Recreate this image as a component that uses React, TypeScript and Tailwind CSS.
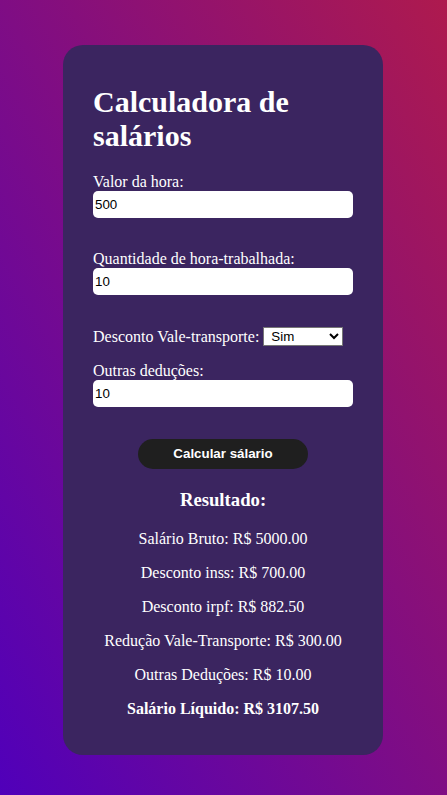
import React from "react";

const results = [
  "Salário Bruto: R$ 5000.00",
  "Desconto inss: R$ 700.00",
  "Desconto irpf: R$ 882.50",
  "Redução Vale-Transporte: R$ 300.00",
  "Outras Deduções: R$ 10.00",
];

export default function App() {
  return (
    <div className="min-h-[795px] w-full bg-[linear-gradient(to_right_top,#5000ba,#ae1a4e)] pt-[45px] pb-10 font-['Liberation_Serif',serif] text-white">
      <div className="ml-[63px] w-[320px] h-[710px] rounded-[20px] bg-[#3b2560] px-[30px] pt-5 pb-[36px]">
        <h1 className="mt-5 mb-[19px] text-[30px] font-bold leading-[34px]">
          Calculadora de salários
        </h1>

        {/* Valor da hora */}
        <label className="block text-[16px] leading-[19px]">Valor da hora:</label>
        <input
          defaultValue="500"
          className="block h-[27px] w-[260px] rounded-[5px] bg-white px-[2px] font-['Liberation_Sans',Arial,sans-serif] text-[13.33px] text-black outline-none"
        />

        <label className="mt-[31px] block text-[16px] leading-[19px]">
          Quantidade de hora-trabalhada:
        </label>
        <input
          defaultValue="10"
          className="block h-[27px] w-[260px] rounded-[5px] bg-white px-[2px] font-['Liberation_Sans',Arial,sans-serif] text-[13.33px] text-black outline-none"
        />

        {/* Vale-transporte */}
        <div className="mt-[32px] flex h-[19px] items-center gap-1">
          <span className="text-[16px] leading-[19px]">Desconto Vale-transporte:</span>
          <select
            defaultValue="sim"
            className="h-[19px] w-[80px] border border-[#767676] bg-white pl-[3px] font-['Liberation_Sans',Arial,sans-serif] text-[13.33px] text-black"
          >
            <option value="sim">Sim</option>
            <option value="nao">Não</option>
          </select>
        </div>

        <label className="mt-[15px] block text-[16px] leading-[19px]">Outras deduções:</label>
        <input
          defaultValue="10"
          className="block h-[27px] w-[260px] rounded-[5px] bg-white px-[2px] font-['Liberation_Sans',Arial,sans-serif] text-[13.33px] text-black outline-none"
        />

        <div className="mt-[32px] flex justify-center">
          <button className="h-[30px] w-[170px] rounded-full bg-[#1f1f1f] font-['Liberation_Sans',Arial,sans-serif] text-[13.33px] font-bold text-white">
            Calcular sálario
          </button>
        </div>

        {/* Resultado */}
        <h3 className="mt-5 text-center text-[18.72px] font-bold leading-[22px]">Resultado:</h3>
        <div className="mt-[19px] flex flex-col gap-4 text-center text-[16px] leading-[18px]">
          {results.map((r) => (
            <p key={r}>{r}</p>
          ))}
          <p className="font-bold">Salário Líquido: R$ 3107.50</p>
        </div>
      </div>
    </div>
  );
}
